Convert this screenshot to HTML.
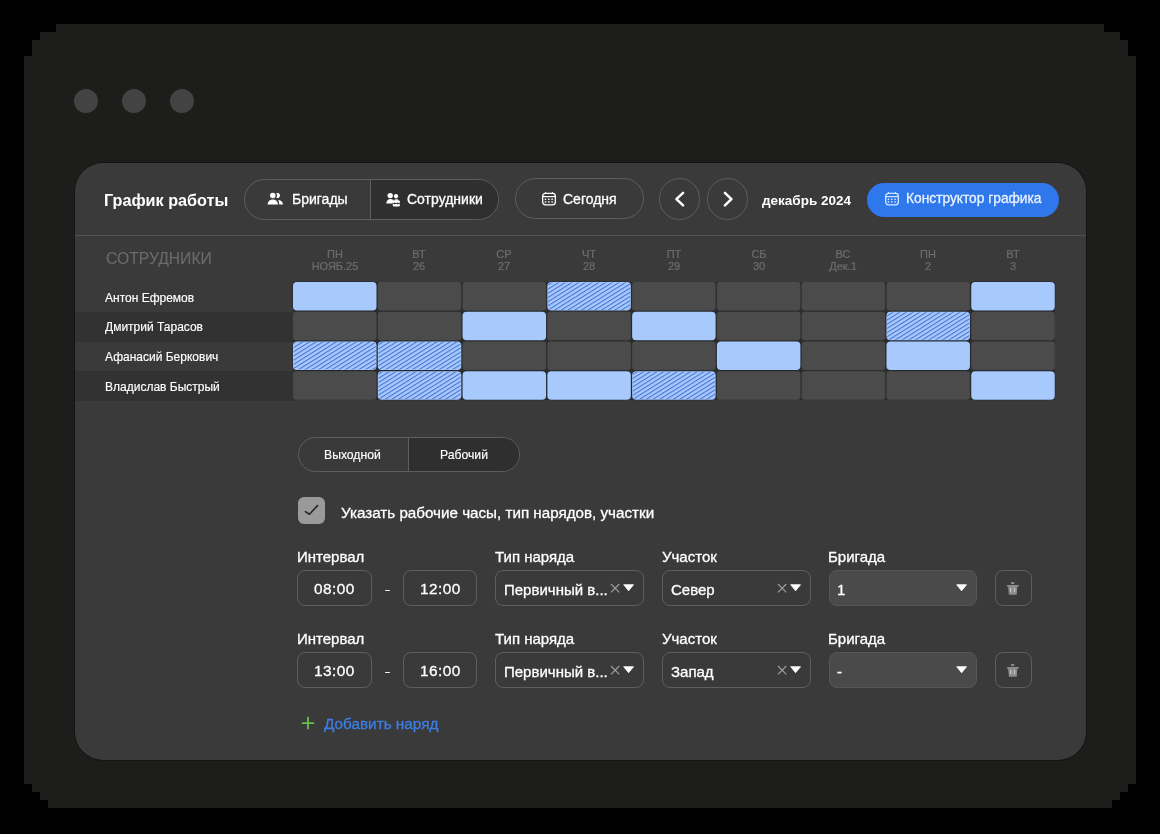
<!DOCTYPE html>
<html><head><meta charset="utf-8">
<style>
*{box-sizing:border-box;margin:0;padding:0}
html,body{width:1160px;height:834px;overflow:hidden;background:#000}
body{position:relative;font-family:"Liberation Sans",sans-serif;color:#fff}
.a{position:absolute}
svg.a{overflow:visible}
.win{position:absolute;left:0;top:0;width:1160px;height:834px;background:#1d1d1b;
clip-path:polygon(56px 24px,1104px 24px,1104px 32px,1120px 32px,1120px 40px,1128px 40px,1128px 56px,1136px 56px,1136px 784px,1128px 784px,1128px 792px,1120px 792px,1120px 800px,1112px 800px,1112px 808px,48px 808px,48px 800px,40px 800px,40px 792px,32px 792px,32px 784px,24px 784px,24px 56px,32px 56px,32px 40px,40px 40px,40px 32px,56px 32px)}
.dot{position:absolute;top:89px;width:24px;height:24px;border-radius:50%;background:#434343}
.panel{position:absolute;left:74.5px;top:163px;width:1011.5px;height:596.5px;border-radius:28px;background:#3a3a3a;box-shadow:0 0 0 1px rgba(0,0,0,0.3)}
.t{position:absolute;white-space:nowrap;line-height:1;will-change:transform}
.r{-webkit-text-stroke:0.3px currentColor}
</style></head><body>
<div class="win"></div>
<div class="dot" style="left:74px"></div>
<div class="dot" style="left:122px"></div>
<div class="dot" style="left:170px"></div>
<div class="panel"></div>
<div class="t" style="left:103.60px;top:191.53px;font-size:16.2px;font-weight:700;color:#ffffff;-webkit-text-stroke:0px #ffffff;">График работы</div>
<div class="a" style="left:244.2px;top:178.6px;width:254.4px;height:41px;border:1.7px solid #5e5e5e;border-radius:21px;overflow:hidden"><div class="a" style="left:125.3px;top:0;width:130px;height:41px;background:#2f2f2f;border-left:1.7px solid #5e5e5e"></div></div>
<svg class="a" style="left:266.00px;top:191.00px" width="18" height="15" viewBox="0 0 18 15"><circle cx="6.8" cy="4.5" r="2.8" fill="#fff"/><path d="M10.2 2.2 A2.6 2.6 0 1 1 10.2 6.8 A3.6 3.6 0 0 0 10.2 2.2Z" fill="#fff"/><path d="M1.5 13.4 C1.8 10.2 4 8.5 6.8 8.5 C9.6 8.5 11.8 10.2 12.1 13.4Z" fill="#fff"/><path d="M12.8 9.1 C15 9.3 16.6 10.8 17 13.4 L13.2 13.4 C13.1 11.6 12.9 10.2 12.3 9.3Z" fill="#fff"/></svg>
<div class="t" style="left:292.00px;top:191.70px;font-size:14px;font-weight:400;color:#ffffff;-webkit-text-stroke:0.3px #ffffff;">Бригады</div>
<svg class="a" style="left:384.00px;top:191.00px" width="18" height="17" viewBox="0 0 18 17"><circle cx="6.2" cy="4.6" r="2.7" fill="#fff"/><circle cx="12" cy="5.2" r="2.1" fill="#fff"/><path d="M2.2 12.5 C2.4 9.8 4 8 6.4 8 C7.6 8 8.6 8.3 9.3 9 L8.6 12.5Z" fill="#fff"/><rect x="8.8" y="9.2" width="7" height="6.4" rx="1.4" fill="#fff"/><rect x="11" y="8.2" width="2.6" height="1.6" rx="0.6" fill="none" stroke="#fff" stroke-width="0.9"/><rect x="8.8" y="12" width="7" height="0.9" fill="#2f2f2f"/><rect x="10.3" y="11.5" width="1" height="1.8" fill="#2f2f2f"/><rect x="13.3" y="11.5" width="1" height="1.8" fill="#2f2f2f"/></svg>
<div class="t" style="left:407.40px;top:191.70px;font-size:14px;font-weight:400;color:#ffffff;-webkit-text-stroke:0.3px #ffffff;">Сотрудники</div>
<div class="a" style="left:514.70px;top:178.10px;width:129.00px;height:41.40px;border:1.7px solid #5e5e5e;border-radius:21px"></div>
<svg class="a" style="left:541.00px;top:191.20px" width="16" height="16" viewBox="0 0 16 16"><rect x="1.65" y="2.35" width="12.7" height="11.5" rx="2.8" fill="none" stroke="#ffffff" stroke-width="1.3"/><rect x="2" y="5.0" width="12" height="1.2" fill="#ffffff"/><rect x="3.9" y="1.0" width="1.2" height="1.8" rx="0.5" fill="#ffffff"/><rect x="10.8" y="1.0" width="1.2" height="1.8" rx="0.5" fill="#ffffff"/><rect x="3.75" y="7.60" width="1.5" height="1.4" fill="#ffffff"/><rect x="3.75" y="10.20" width="1.5" height="1.4" fill="#ffffff"/><rect x="7.05" y="7.60" width="1.5" height="1.4" fill="#ffffff"/><rect x="7.05" y="10.20" width="1.5" height="1.4" fill="#ffffff"/><rect x="10.35" y="7.60" width="1.5" height="1.4" fill="#ffffff"/><rect x="10.35" y="10.20" width="1.5" height="1.4" fill="#ffffff"/></svg>
<div class="t" style="left:563.00px;top:191.80px;font-size:14px;font-weight:400;color:#ffffff;-webkit-text-stroke:0.3px #ffffff;">Сегодня</div>
<div class="a" style="left:658.90px;top:178.40px;width:41.40px;height:41.40px;border:1.7px solid #5e5e5e;border-radius:50%"></div>
<div class="a" style="left:706.50px;top:178.40px;width:41.40px;height:41.40px;border:1.7px solid #5e5e5e;border-radius:50%"></div>
<svg class="a" style="left:668.00px;top:186.00px" width="24" height="26" viewBox="0 0 24 26"><path d="M15.1 6.9 L8.4 13.1 L15.1 19.3" fill="none" stroke="#fff" stroke-width="2.5" stroke-linecap="round" stroke-linejoin="round"/></svg>
<svg class="a" style="left:715.60px;top:186.00px" width="24" height="26" viewBox="0 0 24 26"><path d="M8.9 6.9 L15.4 13.1 L8.9 19.3" fill="none" stroke="#fff" stroke-width="2.5" stroke-linecap="round" stroke-linejoin="round"/></svg>
<div class="t" style="left:761.60px;top:193.53px;font-size:13.5px;font-weight:700;color:#ffffff;-webkit-text-stroke:0px #ffffff;">декабрь 2024</div>
<div class="a" style="left:866.90px;top:182.70px;width:192.00px;height:34.50px;background:#2f78ec;border-radius:18px"></div>
<svg class="a" style="left:884.40px;top:191.20px" width="16" height="16" viewBox="0 0 16 16"><rect x="1.65" y="2.35" width="12.7" height="11.5" rx="2.8" fill="none" stroke="#d2e6ff" stroke-width="1.3"/><rect x="2" y="5.0" width="12" height="1.2" fill="#d2e6ff"/><rect x="3.9" y="1.0" width="1.2" height="1.8" rx="0.5" fill="#d2e6ff"/><rect x="10.8" y="1.0" width="1.2" height="1.8" rx="0.5" fill="#d2e6ff"/><rect x="3.75" y="7.60" width="1.5" height="1.4" fill="#d2e6ff"/><rect x="3.75" y="10.20" width="1.5" height="1.4" fill="#d2e6ff"/><rect x="7.05" y="7.60" width="1.5" height="1.4" fill="#d2e6ff"/><rect x="7.05" y="10.20" width="1.5" height="1.4" fill="#d2e6ff"/><rect x="10.35" y="7.60" width="1.5" height="1.4" fill="#d2e6ff"/><rect x="10.35" y="10.20" width="1.5" height="1.4" fill="#d2e6ff"/></svg>
<div class="t" style="left:906.00px;top:191.81px;font-size:13.75px;font-weight:400;color:#e8f1ff;-webkit-text-stroke:0.3px #e8f1ff;">Конструктор графика</div>
<div class="a" style="left:74.50px;top:234.60px;width:1011.50px;height:1.20px;background:#535353"></div>
<div class="t" style="left:105.60px;top:250.96px;font-size:15.7px;font-weight:400;color:#6b6b6b;-webkit-text-stroke:0.3px #6b6b6b;-webkit-text-stroke:0.1px #6b6b6b">СОТРУДНИКИ</div>
<div class="t" style="left:294.65px;width:80px;text-align:center;top:249.15px;font-size:11px;color:#6d6d6d;-webkit-text-stroke:0.2px #6d6d6d">ПН</div>
<div class="t" style="left:294.65px;width:80px;text-align:center;top:260.95px;font-size:11px;color:#6d6d6d;-webkit-text-stroke:0.2px #6d6d6d">НОЯБ.25</div>
<div class="t" style="left:379.43px;width:80px;text-align:center;top:249.15px;font-size:11px;color:#6d6d6d;-webkit-text-stroke:0.2px #6d6d6d">ВТ</div>
<div class="t" style="left:379.43px;width:80px;text-align:center;top:260.95px;font-size:11px;color:#6d6d6d;-webkit-text-stroke:0.2px #6d6d6d">26</div>
<div class="t" style="left:464.21px;width:80px;text-align:center;top:249.15px;font-size:11px;color:#6d6d6d;-webkit-text-stroke:0.2px #6d6d6d">СР</div>
<div class="t" style="left:464.21px;width:80px;text-align:center;top:260.95px;font-size:11px;color:#6d6d6d;-webkit-text-stroke:0.2px #6d6d6d">27</div>
<div class="t" style="left:548.99px;width:80px;text-align:center;top:249.15px;font-size:11px;color:#6d6d6d;-webkit-text-stroke:0.2px #6d6d6d">ЧТ</div>
<div class="t" style="left:548.99px;width:80px;text-align:center;top:260.95px;font-size:11px;color:#6d6d6d;-webkit-text-stroke:0.2px #6d6d6d">28</div>
<div class="t" style="left:633.77px;width:80px;text-align:center;top:249.15px;font-size:11px;color:#6d6d6d;-webkit-text-stroke:0.2px #6d6d6d">ПТ</div>
<div class="t" style="left:633.77px;width:80px;text-align:center;top:260.95px;font-size:11px;color:#6d6d6d;-webkit-text-stroke:0.2px #6d6d6d">29</div>
<div class="t" style="left:718.55px;width:80px;text-align:center;top:249.15px;font-size:11px;color:#6d6d6d;-webkit-text-stroke:0.2px #6d6d6d">СБ</div>
<div class="t" style="left:718.55px;width:80px;text-align:center;top:260.95px;font-size:11px;color:#6d6d6d;-webkit-text-stroke:0.2px #6d6d6d">30</div>
<div class="t" style="left:803.33px;width:80px;text-align:center;top:249.15px;font-size:11px;color:#6d6d6d;-webkit-text-stroke:0.2px #6d6d6d">ВС</div>
<div class="t" style="left:803.33px;width:80px;text-align:center;top:260.95px;font-size:11px;color:#6d6d6d;-webkit-text-stroke:0.2px #6d6d6d">Дек.1</div>
<div class="t" style="left:888.11px;width:80px;text-align:center;top:249.15px;font-size:11px;color:#6d6d6d;-webkit-text-stroke:0.2px #6d6d6d">ПН</div>
<div class="t" style="left:888.11px;width:80px;text-align:center;top:260.95px;font-size:11px;color:#6d6d6d;-webkit-text-stroke:0.2px #6d6d6d">2</div>
<div class="t" style="left:972.89px;width:80px;text-align:center;top:249.15px;font-size:11px;color:#6d6d6d;-webkit-text-stroke:0.2px #6d6d6d">ВТ</div>
<div class="t" style="left:972.89px;width:80px;text-align:center;top:260.95px;font-size:11px;color:#6d6d6d;-webkit-text-stroke:0.2px #6d6d6d">3</div>
<div class="t" style="left:105.20px;top:291.60px;font-size:12px;font-weight:400;color:#ffffff;-webkit-text-stroke:0.15px #ffffff;">Антон Ефремов</div>
<div class="a" style="left:74.50px;top:311.95px;width:220.00px;height:29.75px;background:#323232"></div>
<div class="t" style="left:105.20px;top:321.35px;font-size:12px;font-weight:400;color:#ffffff;-webkit-text-stroke:0.15px #ffffff;">Дмитрий Тарасов</div>
<div class="t" style="left:105.20px;top:351.10px;font-size:12px;font-weight:400;color:#ffffff;-webkit-text-stroke:0.15px #ffffff;">Афанасий Беркович</div>
<div class="a" style="left:74.50px;top:371.45px;width:220.00px;height:29.75px;background:#323232"></div>
<div class="t" style="left:105.20px;top:380.85px;font-size:12px;font-weight:400;color:#ffffff;-webkit-text-stroke:0.15px #ffffff;">Владислав Быстрый</div>
<div class="a" style="left:292.90px;top:282.20px;width:761.74px;height:117.85px;background:#2d2d2d"></div>
<svg class="a" style="left:291.90px;top:281.20px" width="763" height="119" viewBox="0 0 763 119"><defs><pattern id="hp" width="40" height="3.55" patternUnits="userSpaceOnUse" patternTransform="rotate(-32)"><rect x="0" y="0" width="40" height="1.05" fill="#4470d2"/></pattern></defs><rect x="0.50" y="0.50" width="84.5" height="29.6" rx="4.5" fill="#1f2733"/><rect x="1.00" y="1.00" width="83.5" height="28.6" rx="4" fill="#a8c9fb"/><rect x="85.78" y="1.00" width="83.5" height="28.6" rx="3" fill="#4b4b4b"/><rect x="170.56" y="1.00" width="83.5" height="28.6" rx="3" fill="#4b4b4b"/><rect x="254.84" y="0.50" width="84.5" height="29.6" rx="4.5" fill="#1f2733"/><rect x="255.34" y="1.00" width="83.5" height="28.6" rx="4" fill="#a8c9fb"/><rect x="255.94" y="1.60" width="82.30" height="27.40" rx="3.5" fill="url(#hp)"/><rect x="340.12" y="1.00" width="83.5" height="28.6" rx="3" fill="#4b4b4b"/><rect x="424.90" y="1.00" width="83.5" height="28.6" rx="3" fill="#4b4b4b"/><rect x="509.68" y="1.00" width="83.5" height="28.6" rx="3" fill="#4b4b4b"/><rect x="594.46" y="1.00" width="83.5" height="28.6" rx="3" fill="#4b4b4b"/><rect x="678.74" y="0.50" width="84.5" height="29.6" rx="4.5" fill="#1f2733"/><rect x="679.24" y="1.00" width="83.5" height="28.6" rx="4" fill="#a8c9fb"/><rect x="1.00" y="30.75" width="83.5" height="28.6" rx="3" fill="#4b4b4b"/><rect x="85.78" y="30.75" width="83.5" height="28.6" rx="3" fill="#4b4b4b"/><rect x="170.06" y="30.25" width="84.5" height="29.6" rx="4.5" fill="#1f2733"/><rect x="170.56" y="30.75" width="83.5" height="28.6" rx="4" fill="#a8c9fb"/><rect x="255.34" y="30.75" width="83.5" height="28.6" rx="3" fill="#4b4b4b"/><rect x="339.62" y="30.25" width="84.5" height="29.6" rx="4.5" fill="#1f2733"/><rect x="340.12" y="30.75" width="83.5" height="28.6" rx="4" fill="#a8c9fb"/><rect x="424.90" y="30.75" width="83.5" height="28.6" rx="3" fill="#4b4b4b"/><rect x="509.68" y="30.75" width="83.5" height="28.6" rx="3" fill="#4b4b4b"/><rect x="593.96" y="30.25" width="84.5" height="29.6" rx="4.5" fill="#1f2733"/><rect x="594.46" y="30.75" width="83.5" height="28.6" rx="4" fill="#a8c9fb"/><rect x="595.06" y="31.35" width="82.30" height="27.40" rx="3.5" fill="url(#hp)"/><rect x="679.24" y="30.75" width="83.5" height="28.6" rx="3" fill="#4b4b4b"/><rect x="0.50" y="60.00" width="84.5" height="29.6" rx="4.5" fill="#1f2733"/><rect x="1.00" y="60.50" width="83.5" height="28.6" rx="4" fill="#a8c9fb"/><rect x="1.60" y="61.10" width="82.30" height="27.40" rx="3.5" fill="url(#hp)"/><rect x="85.28" y="60.00" width="84.5" height="29.6" rx="4.5" fill="#1f2733"/><rect x="85.78" y="60.50" width="83.5" height="28.6" rx="4" fill="#a8c9fb"/><rect x="86.38" y="61.10" width="82.30" height="27.40" rx="3.5" fill="url(#hp)"/><rect x="170.56" y="60.50" width="83.5" height="28.6" rx="3" fill="#4b4b4b"/><rect x="255.34" y="60.50" width="83.5" height="28.6" rx="3" fill="#4b4b4b"/><rect x="340.12" y="60.50" width="83.5" height="28.6" rx="3" fill="#4b4b4b"/><rect x="424.40" y="60.00" width="84.5" height="29.6" rx="4.5" fill="#1f2733"/><rect x="424.90" y="60.50" width="83.5" height="28.6" rx="4" fill="#a8c9fb"/><rect x="509.68" y="60.50" width="83.5" height="28.6" rx="3" fill="#4b4b4b"/><rect x="593.96" y="60.00" width="84.5" height="29.6" rx="4.5" fill="#1f2733"/><rect x="594.46" y="60.50" width="83.5" height="28.6" rx="4" fill="#a8c9fb"/><rect x="679.24" y="60.50" width="83.5" height="28.6" rx="3" fill="#4b4b4b"/><rect x="1.00" y="90.25" width="83.5" height="28.6" rx="3" fill="#4b4b4b"/><rect x="85.28" y="89.75" width="84.5" height="29.6" rx="4.5" fill="#1f2733"/><rect x="85.78" y="90.25" width="83.5" height="28.6" rx="4" fill="#a8c9fb"/><rect x="86.38" y="90.85" width="82.30" height="27.40" rx="3.5" fill="url(#hp)"/><rect x="170.06" y="89.75" width="84.5" height="29.6" rx="4.5" fill="#1f2733"/><rect x="170.56" y="90.25" width="83.5" height="28.6" rx="4" fill="#a8c9fb"/><rect x="254.84" y="89.75" width="84.5" height="29.6" rx="4.5" fill="#1f2733"/><rect x="255.34" y="90.25" width="83.5" height="28.6" rx="4" fill="#a8c9fb"/><rect x="339.62" y="89.75" width="84.5" height="29.6" rx="4.5" fill="#1f2733"/><rect x="340.12" y="90.25" width="83.5" height="28.6" rx="4" fill="#a8c9fb"/><rect x="340.72" y="90.85" width="82.30" height="27.40" rx="3.5" fill="url(#hp)"/><rect x="424.90" y="90.25" width="83.5" height="28.6" rx="3" fill="#4b4b4b"/><rect x="509.68" y="90.25" width="83.5" height="28.6" rx="3" fill="#4b4b4b"/><rect x="594.46" y="90.25" width="83.5" height="28.6" rx="3" fill="#4b4b4b"/><rect x="678.74" y="89.75" width="84.5" height="29.6" rx="4.5" fill="#1f2733"/><rect x="679.24" y="90.25" width="83.5" height="28.6" rx="4" fill="#a8c9fb"/></svg>
<div class="a" style="left:297.7px;top:437px;width:222.3px;height:35.2px;border:1.7px solid #5e5e5e;border-radius:18px;overflow:hidden"><div class="a" style="left:109.4px;top:0;width:120px;height:36px;background:#2f2f2f;border-left:1.7px solid #5e5e5e"></div></div>
<div class="t" style="left:324.30px;top:449.43px;font-size:12.2px;font-weight:400;color:#ffffff;-webkit-text-stroke:0.15px #ffffff;">Выходной</div>
<div class="t" style="left:439.50px;top:449.43px;font-size:12.2px;font-weight:400;color:#ffffff;-webkit-text-stroke:0.15px #ffffff;">Рабочий</div>
<div class="a" style="left:297.90px;top:496.80px;width:27.20px;height:27.60px;background:#9a9a9a;border-radius:6px"></div>
<svg class="a" style="left:294.00px;top:492.00px" width="36" height="36" viewBox="0 0 36 36"><path d="M11.4 19.6 L15.5 22.2 L23.5 13.6" fill="none" stroke="#262626" stroke-width="1.6" stroke-linecap="round" stroke-linejoin="round"/></svg>
<div class="t" style="left:340.60px;top:504.78px;font-size:15.2px;font-weight:400;color:#ffffff;-webkit-text-stroke:0.3px #ffffff;">Указать рабочие часы, тип нарядов, участки</div>
<div class="t" style="left:297.00px;top:549.25px;font-size:15px;font-weight:400;color:#ffffff;-webkit-text-stroke:0.3px #ffffff;">Интервал</div>
<div class="t" style="left:495.40px;top:549.25px;font-size:15px;font-weight:400;color:#ffffff;-webkit-text-stroke:0.3px #ffffff;">Тип наряда</div>
<div class="t" style="left:661.60px;top:549.25px;font-size:15px;font-weight:400;color:#ffffff;-webkit-text-stroke:0.3px #ffffff;">Участок</div>
<div class="t" style="left:828.20px;top:549.25px;font-size:15px;font-weight:400;color:#ffffff;-webkit-text-stroke:0.3px #ffffff;">Бригада</div>
<div class="a" style="left:297.20px;top:569.70px;width:74.40px;height:36.70px;border:1.7px solid #5e5e5e;border-radius:8px"></div>
<div class="a" style="left:403.00px;top:569.70px;width:74.40px;height:36.70px;border:1.7px solid #5e5e5e;border-radius:8px"></div>
<div class="t" style="left:297.20px;top:580.81px;font-size:15.4px;font-weight:400;color:#ffffff;-webkit-text-stroke:0.3px #ffffff;width:74.4px;text-align:center;letter-spacing:0.45px;text-indent:0.45px">08:00</div>
<div class="t" style="left:403.00px;top:580.81px;font-size:15.4px;font-weight:400;color:#ffffff;-webkit-text-stroke:0.3px #ffffff;width:74.4px;text-align:center;letter-spacing:0.45px;text-indent:0.45px">12:00</div>
<div class="a" style="left:384.60px;top:589.80px;width:5.50px;height:1.50px;background:#f0f0f0;border-radius:0.7px"></div>
<div class="a" style="left:495.30px;top:569.70px;width:148.60px;height:36.70px;border:1.7px solid #5e5e5e;border-radius:8px"></div>
<div class="t" style="left:503.90px;top:582.15px;font-size:15px;font-weight:400;color:#ffffff;-webkit-text-stroke:0.3px #ffffff;">Первичный в...</div>
<svg class="a" style="left:610.20px;top:583.10px" width="11" height="11" viewBox="0 0 11 11"><path d="M1 1 L9.3 9.4 M9.3 1 L1 9.4" stroke="#9c9c9c" stroke-width="1.2" fill="none"/></svg>
<svg class="a" style="left:623.10px;top:583.50px" width="12" height="8" viewBox="0 0 12 8"><path d="M0.7 0.7 L10.5 0.7 L5.6 6.8Z" fill="#fff" stroke="#fff" stroke-width="0.8" stroke-linejoin="round"/></svg>
<div class="a" style="left:662.30px;top:569.70px;width:148.60px;height:36.70px;border:1.7px solid #5e5e5e;border-radius:8px"></div>
<div class="t" style="left:670.90px;top:582.15px;font-size:15px;font-weight:400;color:#ffffff;-webkit-text-stroke:0.3px #ffffff;">Север</div>
<svg class="a" style="left:777.20px;top:583.10px" width="11" height="11" viewBox="0 0 11 11"><path d="M1 1 L9.3 9.4 M9.3 1 L1 9.4" stroke="#9c9c9c" stroke-width="1.2" fill="none"/></svg>
<svg class="a" style="left:790.10px;top:583.50px" width="12" height="8" viewBox="0 0 12 8"><path d="M0.7 0.7 L10.5 0.7 L5.6 6.8Z" fill="#fff" stroke="#fff" stroke-width="0.8" stroke-linejoin="round"/></svg>
<div class="a" style="left:828.50px;top:569.70px;width:148.10px;height:36.70px;background:#4a4a4a;border:1px solid #565656;border-radius:8px"></div>
<div class="t" style="left:837.20px;top:581.95px;font-size:15px;font-weight:400;color:#ffffff;-webkit-text-stroke:0.3px #ffffff;">1</div>
<svg class="a" style="left:956.20px;top:583.90px" width="12" height="8" viewBox="0 0 12 8"><path d="M0.7 0.7 L10.5 0.7 L5.6 6.8Z" fill="#fff" stroke="#fff" stroke-width="0.8" stroke-linejoin="round"/></svg>
<div class="a" style="left:995.00px;top:569.70px;width:36.50px;height:36.70px;border:1.7px solid #5e5e5e;border-radius:8px"></div>
<svg class="a" style="left:1000.00px;top:576.00px" width="26" height="24" viewBox="0 0 26 24"><rect x="10.9" y="6" width="3.5" height="2" rx="0.8" fill="#8c8c8c"/><path d="M6.9 8.9 L18.8 8.9 L18.8 10.6 L17.3 10.6 L16.8 18.8 L8.9 18.8 L8.1 10.6 L6.9 10.6Z" fill="#8c8c8c"/><rect x="10.2" y="12" width="1" height="4.2" fill="#cfcfcf"/><rect x="14.1" y="12" width="1" height="4.2" fill="#cfcfcf"/></svg>
<div class="t" style="left:297.00px;top:631.25px;font-size:15px;font-weight:400;color:#ffffff;-webkit-text-stroke:0.3px #ffffff;">Интервал</div>
<div class="t" style="left:495.40px;top:631.25px;font-size:15px;font-weight:400;color:#ffffff;-webkit-text-stroke:0.3px #ffffff;">Тип наряда</div>
<div class="t" style="left:661.60px;top:631.25px;font-size:15px;font-weight:400;color:#ffffff;-webkit-text-stroke:0.3px #ffffff;">Участок</div>
<div class="t" style="left:828.20px;top:631.25px;font-size:15px;font-weight:400;color:#ffffff;-webkit-text-stroke:0.3px #ffffff;">Бригада</div>
<div class="a" style="left:297.20px;top:651.70px;width:74.40px;height:36.70px;border:1.7px solid #5e5e5e;border-radius:8px"></div>
<div class="a" style="left:403.00px;top:651.70px;width:74.40px;height:36.70px;border:1.7px solid #5e5e5e;border-radius:8px"></div>
<div class="t" style="left:297.20px;top:662.81px;font-size:15.4px;font-weight:400;color:#ffffff;-webkit-text-stroke:0.3px #ffffff;width:74.4px;text-align:center;letter-spacing:0.45px;text-indent:0.45px">13:00</div>
<div class="t" style="left:403.00px;top:662.81px;font-size:15.4px;font-weight:400;color:#ffffff;-webkit-text-stroke:0.3px #ffffff;width:74.4px;text-align:center;letter-spacing:0.45px;text-indent:0.45px">16:00</div>
<div class="a" style="left:384.60px;top:671.80px;width:5.50px;height:1.50px;background:#f0f0f0;border-radius:0.7px"></div>
<div class="a" style="left:495.30px;top:651.70px;width:148.60px;height:36.70px;border:1.7px solid #5e5e5e;border-radius:8px"></div>
<div class="t" style="left:503.90px;top:664.15px;font-size:15px;font-weight:400;color:#ffffff;-webkit-text-stroke:0.3px #ffffff;">Первичный в...</div>
<svg class="a" style="left:610.20px;top:665.10px" width="11" height="11" viewBox="0 0 11 11"><path d="M1 1 L9.3 9.4 M9.3 1 L1 9.4" stroke="#9c9c9c" stroke-width="1.2" fill="none"/></svg>
<svg class="a" style="left:623.10px;top:665.50px" width="12" height="8" viewBox="0 0 12 8"><path d="M0.7 0.7 L10.5 0.7 L5.6 6.8Z" fill="#fff" stroke="#fff" stroke-width="0.8" stroke-linejoin="round"/></svg>
<div class="a" style="left:662.30px;top:651.70px;width:148.60px;height:36.70px;border:1.7px solid #5e5e5e;border-radius:8px"></div>
<div class="t" style="left:670.90px;top:664.15px;font-size:15px;font-weight:400;color:#ffffff;-webkit-text-stroke:0.3px #ffffff;">Запад</div>
<svg class="a" style="left:777.20px;top:665.10px" width="11" height="11" viewBox="0 0 11 11"><path d="M1 1 L9.3 9.4 M9.3 1 L1 9.4" stroke="#9c9c9c" stroke-width="1.2" fill="none"/></svg>
<svg class="a" style="left:790.10px;top:665.50px" width="12" height="8" viewBox="0 0 12 8"><path d="M0.7 0.7 L10.5 0.7 L5.6 6.8Z" fill="#fff" stroke="#fff" stroke-width="0.8" stroke-linejoin="round"/></svg>
<div class="a" style="left:828.50px;top:651.70px;width:148.10px;height:36.70px;background:#4a4a4a;border:1px solid #565656;border-radius:8px"></div>
<div class="t" style="left:837.20px;top:663.95px;font-size:15px;font-weight:400;color:#ffffff;-webkit-text-stroke:0.3px #ffffff;">-</div>
<svg class="a" style="left:956.20px;top:665.90px" width="12" height="8" viewBox="0 0 12 8"><path d="M0.7 0.7 L10.5 0.7 L5.6 6.8Z" fill="#fff" stroke="#fff" stroke-width="0.8" stroke-linejoin="round"/></svg>
<div class="a" style="left:995.00px;top:651.70px;width:36.50px;height:36.70px;border:1.7px solid #5e5e5e;border-radius:8px"></div>
<svg class="a" style="left:1000.00px;top:658.00px" width="26" height="24" viewBox="0 0 26 24"><rect x="10.9" y="6" width="3.5" height="2" rx="0.8" fill="#8c8c8c"/><path d="M6.9 8.9 L18.8 8.9 L18.8 10.6 L17.3 10.6 L16.8 18.8 L8.9 18.8 L8.1 10.6 L6.9 10.6Z" fill="#8c8c8c"/><rect x="10.2" y="12" width="1" height="4.2" fill="#cfcfcf"/><rect x="14.1" y="12" width="1" height="4.2" fill="#cfcfcf"/></svg>
<svg class="a" style="left:300.00px;top:715.00px" width="16" height="16" viewBox="0 0 16 16"><path d="M8 2.6 L8 13.6 M2.5 8.1 L13.5 8.1" stroke="#6cc04a" stroke-width="1.8" stroke-linecap="round"/></svg>
<div class="t" style="left:323.80px;top:715.50px;font-size:15.3px;font-weight:400;color:#3d7ee6;-webkit-text-stroke:0.3px #3d7ee6;">Добавить наряд</div>
</body></html>
